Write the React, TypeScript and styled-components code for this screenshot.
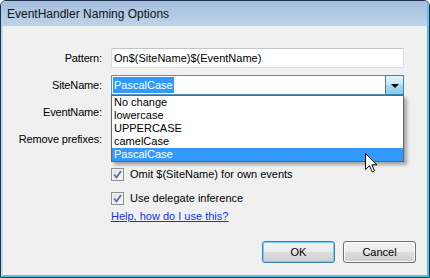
import React from 'react';
import styled, { createGlobalStyle, css } from 'styled-components';

const GlobalStyle = createGlobalStyle`
  html, body {
    margin: 0;
    padding: 0;
    background: #ffffff;
  }
  body {
    font-family: "Liberation Sans", Arial, sans-serif;
    font-size: 11px;
    color: #000;
  }
`;

const Window = styled.div`
  position: relative;
  width: 430px;
  height: 278px;
  box-sizing: border-box;
  display: flex;
  flex-direction: column;
  border: 1px solid #1c3450;
  border-radius: 6px 6px 0 0;
  overflow: hidden;
  background: #f0f0f0;
`;

const TitleBar = styled.div`
  height: 25px;
  flex: none;
  display: flex;
  align-items: center;
  padding-left: 6px;
  background: linear-gradient(#a5bfdd, #bdd3ea);
  border-right: 2px solid #5cc6ee;
  font-size: 12px;
  color: #111;
`;

const Client = styled.div`
  flex: 1;
  display: flex;
  flex-direction: column;
  padding: 22px 0 12px 0;
  border-left: 2px solid #c3d7ed;
  border-right: 2px solid #4fc0ec;
  border-bottom: 2px solid #4fc0ec;
  background: #f0f0f0;
`;

const Fields = styled.div`
  display: grid;
  grid-template-columns: 99px 293px;
  grid-template-rows: repeat(4, 20px);
  column-gap: 9px;
  row-gap: 7px;
`;

const Label = styled.div`
  display: flex;
  align-items: center;
  justify-content: flex-end;
  white-space: nowrap;
  letter-spacing: -0.15px;
`;

const TextBox = styled.div`
  height: 20px;
  box-sizing: border-box;
  display: flex;
  align-items: center;
  padding-left: 2px;
  background: #fff;
  border: 1px solid #dadde3;
  border-top-color: #c2c5cc;
  white-space: nowrap;
`;

const Combo = styled.div<{ $open?: boolean }>`
  position: relative;
  height: 20px;
  box-sizing: border-box;
  display: flex;
  align-items: center;
  background: #fff;
  border: 1px solid ${p => (p.$open ? '#5a8fc0' : '#abadb3')};
  ${p => p.$open && css`z-index: 5;`}
`;

const ComboValue = styled.span<{ $selected?: boolean }>`
  margin-left: 1px;
  padding: 0 1px;
  height: 16px;
  line-height: 16px;
  ${p =>
    p.$selected &&
    css`
      background: #3399ff;
      color: #fff;
    `}
`;

const DropButton = styled.div<{ $open?: boolean }>`
  margin: -1px -1px -1px auto;
  align-self: stretch;
  width: 17px;
  display: flex;
  align-items: center;
  justify-content: center;
  border: 1px solid ${p => (p.$open ? '#3c7fb1' : '#acacac')};
  background: ${p =>
    p.$open
      ? 'linear-gradient(#e6f4fc 0%, #bee6fd 50%, #a7d9f5 51%, #8ccaec 100%)'
      : 'linear-gradient(#f2f2f2, #dcdcdc)'};
`;

const Arrow = styled.span`
  width: 0;
  height: 0;
  border-left: 4px solid transparent;
  border-right: 4px solid transparent;
  border-top: 4px solid #000;
  margin-top: 1px;
`;

const DropList = styled.div`
  position: absolute;
  top: calc(100% + 1px);
  left: -1px;
  right: -1px;
  z-index: 10;
  background: #fff;
  border: 1px solid #646464;
  box-shadow: 3px 3px 3px rgba(0, 0, 0, 0.3);
`;

const DropItem = styled.div<{ $selected?: boolean }>`
  height: 13px;
  line-height: 13px;
  padding-left: 2px;
  white-space: nowrap;
  ${p =>
    p.$selected &&
    css`
      background: #3399ff;
      color: #fff;
    `}
`;

const Options = styled.div`
  display: flex;
  flex-direction: column;
  margin: 18px 0 0 108px;
`;

const CheckRow = styled.label<{ $gap?: number }>`
  height: 14px;
  display: flex;
  align-items: center;
  gap: 6px;
  margin-top: ${p => p.$gap ?? 0}px;
  white-space: nowrap;
`;

const CheckBox = styled.span`
  width: 13px;
  height: 13px;
  box-sizing: border-box;
  flex: none;
  display: flex;
  align-items: center;
  justify-content: center;
  border: 1px solid #8e8f8f;
  background: linear-gradient(135deg, #dcdfe3, #fbfbfb);
  box-shadow: inset 0 0 0 1px #f4f4f4;
`;

const HelpLink = styled.a`
  height: 14px;
  line-height: 14px;
  margin-top: 4px;
  color: #1433f0;
  text-decoration: underline;
  cursor: pointer;
  align-self: flex-start;
`;

const ButtonRow = styled.div`
  margin-top: auto;
  display: flex;
  justify-content: flex-end;
  gap: 8px;
  padding-right: 11px;
`;

const Button = styled.button<{ $default?: boolean }>`
  width: 73px;
  height: 22px;
  padding: 0;
  font-family: "Liberation Sans", Arial, sans-serif;
  font-size: 11px;
  color: #000;
  border-radius: 3px;
  border: 1px solid ${p => (p.$default ? '#3c7fb1' : '#707070')};
  background: linear-gradient(#f2f2f2 0%, #ebebeb 50%, #dddddd 51%, #cfcfcf 100%);
  box-shadow: inset 0 0 0 1px ${p => (p.$default ? '#6fd3f7' : '#fbfbfb')};
`;

const Cursor = styled.svg`
  position: absolute;
  left: 364px;
  top: 152px;
  z-index: 20;
`;

const caseOptions = ['No change', 'lowercase', 'UPPERCASE', 'camelCase', 'PascalCase'];

const Check = () => (
  <svg width="9" height="9" viewBox="0 0 9 9">
    <path d="M1 4.5 L3.5 7.5 L8 1" fill="none" stroke="#5a6f9e" strokeWidth="1.8" />
  </svg>
);

export default function App() {
  return (
    <>
      <GlobalStyle />
      <Window>
        <TitleBar>EventHandler Naming Options</TitleBar>
        <Client>
          <Fields>
            <Label>Pattern:</Label>
            <TextBox>On$(SiteName)$(EventName)</TextBox>

            <Label>SiteName:</Label>
            <Combo $open>
              <ComboValue $selected>PascalCase</ComboValue>
              <DropButton $open>
                <Arrow />
              </DropButton>
              <DropList>
                {caseOptions.map(o => (
                  <DropItem key={o} $selected={o === 'PascalCase'}>
                    {o}
                  </DropItem>
                ))}
              </DropList>
            </Combo>

            {/* covered by the open list, so left without text */}
            <Label>EventName:</Label>
            <Combo>
              <DropButton>
                <Arrow />
              </DropButton>
            </Combo>

            <Label>Remove prefixes:</Label>
            <TextBox />
          </Fields>

          <Options>
            <CheckRow>
              <CheckBox>
                <Check />
              </CheckBox>
              Omit $(SiteName) for own events
            </CheckRow>
            <CheckRow $gap={10}>
              <CheckBox>
                <Check />
              </CheckBox>
              Use delegate inference
            </CheckRow>
            <HelpLink>Help, how do I use this?</HelpLink>
          </Options>

          <ButtonRow>
            <Button $default>OK</Button>
            <Button>Cancel</Button>
          </ButtonRow>
        </Client>

        <Cursor width="14" height="21" viewBox="0 0 14 21">
          <path
            d="M0.5 0.5 L0.5 16.5 L4.5 12.7 L7.3 19 L9.6 18 L6.9 11.8 L12 11.8 Z"
            fill="#fff"
            stroke="#000"
            strokeWidth="1"
          />
        </Cursor>
      </Window>
    </>
  );
}
